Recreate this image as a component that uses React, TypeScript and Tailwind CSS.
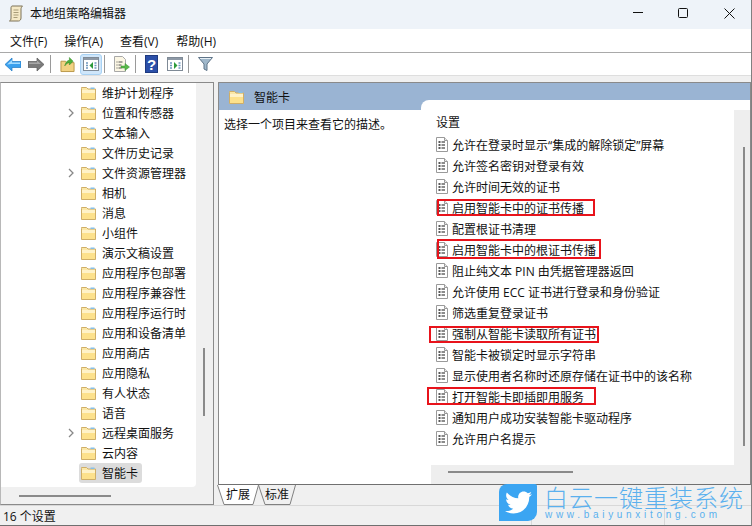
import React from "react";
import { FaTwitter } from "react-icons/fa";

const tree: [string, boolean][] = [
  ["维护计划程序", false], ["位置和传感器", true], ["文本输入", false], ["文件历史记录", false],
  ["文件资源管理器", true], ["相机", false], ["消息", false], ["小组件", false], ["演示文稿设置", false],
  ["应用程序包部署", false], ["应用程序兼容性", false], ["应用程序运行时", false], ["应用和设备清单", false],
  ["应用商店", false], ["应用隐私", false], ["有人状态", false], ["语音", false], ["远程桌面服务", true],
  ["云内容", false], ["智能卡", false],
];

const items: { t: string; box?: string }[] = [
  { t: "允许在登录时显示“集成的解除锁定”屏幕" },
  { t: "允许签名密钥对登录有效" },
  { t: "允许时间无效的证书" },
  { t: "启用智能卡中的证书传播", box: "left-[1px] top-[2px] w-[158px] h-[17px]" },
  { t: "配置根证书清理" },
  { t: "启用智能卡中的根证书传播", box: "left-[1px] top-0 w-[164px] h-[20px]" },
  { t: "阻止纯文本 PIN 由凭据管理器返回" },
  { t: "允许使用 ECC 证书进行登录和身份验证" },
  { t: "筛选重复登录证书" },
  { t: "强制从智能卡读取所有证书", box: "-left-[7px] top-[3px] w-[170px] h-[17px]" },
  { t: "智能卡被锁定时显示字符串" },
  { t: "显示使用者名称时还原存储在证书中的该名称" },
  { t: "打开智能卡即插即用服务", box: "-left-[9px] top-[1px] w-[169px] h-[18px]" },
  { t: "通知用户成功安装智能卡驱动程序" },
  { t: "允许用户名提示" },
];

function Folder({ className = "" }: { className?: string }) {
  return (
    <svg width="15" height="14" viewBox="0 0 15 14" className={className}>
      <path d="M.5 2.500V1.500h5L7 3h7.500v10.500H.5z" fill="#fbe7a6" stroke="#cfae68" strokeWidth="1" />
      <rect x="1" y="4" width="13" height="9" fill="#fde18c" />
      <path d="M1 4h13v3H1z" fill="#fff2c8" />
      <rect x="9.500" y="1.500" width="4" height="1.500" fill="#86c0e8" />
    </svg>
  );
}

function Doc() {
  return (
    <svg width="12" height="15" viewBox="0 0 12 15" className="shrink-0">
      <path d="M.5.500h8l3 3v11H.5z" fill="#fff" stroke="#9a9a9a" />
      <path d="M8.500.500v3h3" fill="#e8e8e8" stroke="#9a9a9a" />
      <path d="M2.500 5h2M2.500 8h2M2.500 11h2" stroke="#222" strokeWidth="1.500" />
      <path d="M5.500 5h3.500M5.500 8h3.500M5.500 11h3.500" stroke="#666" strokeWidth="1.300" />
    </svg>
  );
}

function Sep() {
  return <div className="w-px h-[18px] bg-[#9a9a9a]" />;
}

function Win({ arrow, color }: { arrow: "l" | "r"; color: string }) {
  return (
    <svg width="16" height="14" viewBox="0 0 16 14">
      <rect x=".5" y=".5" width="15" height="13" fill="#fff" stroke="#7f8a96" />
      <rect x="1" y="1" width="14" height="2" fill="#8e99a6" />
      <path d="M3 6h2M3 8.500h2M3 11h2M11.500 6h2M11.500 8.500h2M11.500 11h2" stroke="#6f96be" strokeWidth="1.300" />
      <path d={arrow === "l" ? "M10 5v7L6.500 8.500z" : "M7 5v7l3.500-3.500z"} fill={color} />
    </svg>
  );
}

function Toolbar() {
  return (
    <div className="h-[23px] flex items-center bg-white pl-[5px] border-b border-[#dedede]">
      <svg width="16" height="15" viewBox="0 0 16 14">
        <path d="M0 7l7-6.500V4h9v6H7v3.500z" fill="#3aa0ee" stroke="#1f78c4" strokeWidth=".7" />
        <path d="M2 7l5-4.500V5h8v1.500H6z" fill="#a5dcff" />
      </svg>
      <svg width="16" height="15" viewBox="0 0 16 14" className="ml-[7px]">
        <path d="M16 7L9 .5V4H0v6h9v3.500z" fill="#7a7a7a" stroke="#5a5a5a" strokeWidth=".7" />
        <path d="M1 5h8V3l4 3.500H1z" fill="#a8a8a8" />
      </svg>
      <div className="ml-[6px] mr-[9px]"><Sep /></div>
      <svg width="15" height="17" viewBox="0 0 16 17">
        <path d="M1 5h5l1 1.500h8V16H1z" fill="#f2d283" stroke="#b79546" />
        <path d="M5 10C6 6 8 4 10 4V1l4 4-4 4V6.500C8 6.500 6.500 8 5 10z" fill="#4fb03b" stroke="#2e8522" strokeWidth=".5" />
      </svg>
      <div className="ml-[5px] w-[22px] h-[21px] rounded-[3px] bg-[#cfe6fa] border border-[#a8d2f4] flex items-center justify-center">
        <Win arrow="l" color="#2e9a3c" />
      </div>
      <div className="ml-[2px] mr-[8px]"><Sep /></div>
      <svg width="17" height="17" viewBox="0 0 17 17">
        <path d="M1.500.500h8l3 3v12h-11z" fill="#fbf6e4" stroke="#a8a8a8" />
        <path d="M3.500 6h1M5.500 6h4M3.500 9h1M5.500 9h3M3.500 12h1M5.500 12h3" stroke="#555" />
        <path d="M8 10h4V7.500l4.500 3.500-4.500 3.500V12H8z" fill="#58b948" stroke="#3b8f30" strokeWidth=".5" />
      </svg>
      <div className="ml-[5px] mr-[9px]"><Sep /></div>
      <div className="w-[13px] h-[18px] bg-[#2b4fa8] border border-[#1e3a80] flex items-center justify-center text-white font-bold text-[15px] leading-none font-['Liberation_Sans',sans-serif]">?</div>
      <div className="ml-[9px] mr-[5px]"><Win arrow="r" color="#2e9a3c" /></div>
      <div className="mr-[9px]"><Sep /></div>
      <svg width="15" height="16" viewBox="0 0 15 15">
        <path d="M.5 1h14L9 7.500V14l-3-1.500v-5z" fill="#9fb7ca" stroke="#5f7488" />
        <path d="M2 1.500h11v1H2z" fill="#e6eff5" />
      </svg>
    </div>
  );
}

function Tab({ label, active, width, className = "" }: { label: string; active?: boolean; width: number; className?: string }) {
  return (
    <div className={`relative h-[20px] flex items-center justify-center ${className}`} style={{ width }}>
      <svg width={width} height="20" viewBox={`0 0 ${width} 20`} className="absolute left-0 top-0">
        <path
          d={`M0.500 0L7 19.500H${width - 6}L${width - 0.5} 0`}
          fill={active ? "#fff" : "#f0f0f0"}
          stroke="#808080"
        />
      </svg>
      <span className="relative leading-none">{label}</span>
    </div>
  );
}

export default function App() {
  return (
    <div className="relative w-[752px] h-[526px] overflow-hidden bg-[#f0f0f0] border-r border-[#808080] text-[12px] text-[#111] font-['Open_Sans','Noto_Sans_CJK_SC',sans-serif]">
      {/* title */}
      <div className="h-[29px] bg-[#eef3f9] flex items-center pl-[8px] pb-[3px]">
        <svg width="16" height="17" viewBox="0 0 16 17">
          <path d="M4 1h10.500c-1 1-1.500 2-1.500 3v9c0 1.500-1 3-2.500 3H1.500c1-.500 1.500-1.500 1.500-3V3c0-1 .5-2 1-2z" fill="#f5e9c6" stroke="#7d7358" />
          <path d="M5.500 5h5M5.500 7.500h5M5.500 10h5M5.500 12.500h4" stroke="#a89c78" />
        </svg>
        <span className="ml-[6px] leading-none pt-[2px]">本地组策略编辑器</span>
        <div className="ml-auto flex items-center text-[#111]">
          <svg width="10" height="2" className="mr-[35px]"><rect width="10" height="1" fill="#111" /></svg>
          <svg width="10" height="10" className="mr-[36px]"><rect x=".5" y=".5" width="9" height="9" rx="1" fill="none" stroke="#111" /></svg>
          <svg width="11" height="11" className="mr-[16px]"><path d="M.5.500l10 10M10.500.500l-10 10" stroke="#111" /></svg>
        </div>
      </div>
      {/* menu */}
      <div className="h-[24px] bg-white border-b border-[#a9a9a9] flex items-center pl-[10px] gap-[17px]">
        <span className="leading-none pt-[2px]">文件(F)</span>
        <span className="leading-none pt-[2px]">操作(A)</span>
        <span className="leading-none pt-[2px]">查看(V)</span>
        <span className="leading-none pt-[2px] ml-[1px]">帮助(H)</span>
      </div>
      <Toolbar />
      <div className="flex h-[423px] mt-[6px]">
        {/* left tree */}
        <div className="w-[214px] h-[423px] border border-[#8a8a8a] border-l-[#b8b8b8] flex flex-col bg-[#f0f0f0] mr-[4px]">
          <div className="flex h-[404px] shrink-0">
            <div className="w-[195px] h-[404px] bg-white rounded-br-[4px] pl-[78px]">
              {tree.map(([name, arrow]) => (
                <div key={name} className="relative h-[20px] flex items-center">
                  {arrow && (
                    <svg width="6" height="10" viewBox="0 0 6 10" className="absolute -left-[11px] top-[5px]">
                      <path d="M1 1l4 4-4 4" fill="none" stroke="#888" strokeWidth="1.300" />
                    </svg>
                  )}
                  <div className={`flex items-center h-[20px] pl-[2px] pr-[4px] rounded-[3px] ${name === "智能卡" ? "bg-[#dcdcdc]" : ""}`}>
                    <Folder className="shrink-0" />
                    <span className="ml-[6px] leading-none pt-[2px] whitespace-nowrap">{name}</span>
                  </div>
                </div>
              ))}
            </div>
            <div className="relative flex-1">
              <div className="absolute left-[7px] top-[265px] w-[2px] h-[68px] bg-[#8a8a8a]" />
            </div>
          </div>
          <div className="flex-1 flex items-center pl-[18px]">
            <div className="w-[92px] h-[2px] bg-[#8a8a8a]" />
          </div>
        </div>
        {/* right */}
        <div className="w-[533px] flex flex-col">
          <div className="h-[403px] border border-[#8a8a8a] border-b-[#707070] flex flex-col bg-white shrink-0">
            <div className="h-[27px] bg-[#9ab4d3] flex items-center pl-[10px] shrink-0">
              <Folder />
              <span className="ml-[10px] leading-none pt-[2px]">智能卡</span>
            </div>
            <div className="flex flex-1 min-h-0">
              <div className="w-[202px] pl-[5px] pt-[7px] leading-[16px]">选择一个项目来查看它的描述。</div>
              <div className="flex-1 flex flex-col -mt-[10px] relative">
                <div className="h-[365px] flex shrink-0">
                  <div className="w-[313px] bg-white rounded-tl-[8px] pt-[15px] pl-[15px]">
                    <div className="leading-[16px] h-[20px]">设置</div>
                    <div className="-mt-[1px]">
                      {items.map((it) => (
                        <div key={it.t} className="relative h-[21px] flex items-center">
                          <Doc />
                          <span className="ml-[4px] leading-none pt-[2px] whitespace-nowrap">{it.t}</span>
                          {it.box && <div className={`absolute border-2 border-[#e8131b] ${it.box}`} />}
                        </div>
                      ))}
                    </div>
                  </div>
                  <div className="flex-1 flex flex-col">
                    <div className="h-[10px] bg-white shrink-0" />
                    <div className="flex-1 bg-[#eeeeee]" />
                  </div>
                </div>
                <div className="flex-1 flex">
                  <div className="w-[10px] bg-white shrink-0" />
                  <div className="flex-1 bg-[#eeeeee] pl-[17px] pt-[6px]">
                    <div className="w-[125px] h-[2px] bg-[#8a8a8a]" />
                  </div>
                </div>
                <div className="absolute right-[5px] top-[47px] w-[2px] h-[299px] bg-[#8a8a8a]" />
              </div>
            </div>
          </div>
          <div className="flex h-[20px] -ml-[1px]">
            <Tab label="扩展" active width={42} />
            <Tab label="标准" width={38} className="-ml-[1px]" />
          </div>
        </div>
      </div>
      {/* status */}
      <div className="absolute left-0 right-0 bottom-0 h-[21px] border-t border-t-[#d8d8d8] border-b border-b-[#6f6f6f] flex bg-[#f0f0f0]">
        <div className="w-[532px] border-r border-[#d8d8d8] flex items-center pl-[3px]"><span className="leading-none pt-[2px]">16 个设置</span></div>
        <div className="w-[133px] border-r border-[#d8d8d8]" />
      </div>
      {/* watermark */}
      <div className="absolute left-[499px] top-[484px] w-[38px] h-[37px] bg-[#3ba5f2] rounded-tl-[8px] rounded-tr-[2px] rounded-br-[9px] flex items-center justify-center text-white">
        <FaTwitter size={27} />
      </div>
      <div className="absolute left-[544px] top-[484px] text-[#5bb0ee] text-[24px] leading-[25px] tracking-[1px] font-light whitespace-nowrap font-['Noto_Sans_CJK_SC',sans-serif]">白云一键重装系统</div>
      <div className="absolute left-[545px] top-[510px] text-[#5bb0ee] text-[10px] leading-[10px] tracking-[3.700px] font-['Liberation_Sans',sans-serif] whitespace-nowrap">www.baiyunxitong.com</div>
    </div>
  );
}
